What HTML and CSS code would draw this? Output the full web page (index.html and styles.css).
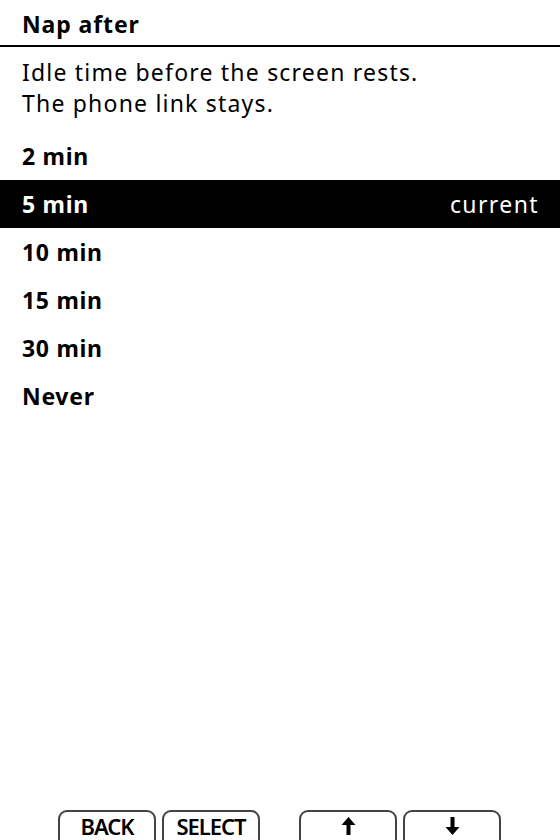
FILE: index.html
```html
<!DOCTYPE html>
<html lang="en">
<head>
  <meta charset="UTF-8">
  <meta name="viewport" content="width=device-width, initial-scale=1.0">
  <link rel="stylesheet" href="styles.css">
</head>
<body>
  <div class="screen">
    <div class="header">Nap after</div>

    <div class="desc">
      <div>Idle time before the screen rests.</div>
      <div>The phone link stays.</div>
    </div>

    <ul class="options">
      <li class="option">2 min</li>
      <li class="option selected">5 min <span class="tag">current</span></li>
      <li class="option">10 min</li>
      <li class="option">15 min</li>
      <li class="option">30 min</li>
      <li class="option">Never</li>
    </ul>

    <div class="hints">
      <div class="hint">BACK</div>
      <div class="hint">SELECT</div>
      <div class="hint spaced">
        <svg width="15" height="18" viewBox="0 0 15 18">
          <path d="M7.5 0 L0.5 8 H5.5 V18 H9.5 V8 H14.5 Z" fill="#000"/>
        </svg>
      </div>
      <div class="hint">
        <svg width="15" height="18" viewBox="0 0 15 18">
          <path d="M7.5 18 L0.5 10 H5.5 V0 H9.5 V10 H14.5 Z" fill="#000"/>
        </svg>
      </div>
    </div>
  </div>
</body>
</html>
```

FILE: styles.css
```css
body {
  margin: 0;
  background-color: white;
  color: black;
  font-family: 'Noto Sans', 'Open Sans', sans-serif;
}

.screen {
  width: 560px;
  height: 840px;
  display: flex;
  flex-direction: column;
  overflow: hidden;
}

.header {
  height: 45px;
  padding: 0 22px;
  line-height: 48px;
  font-size: 23px;
  font-weight: bold;
  letter-spacing: 0.9px;
  border-bottom: 2px solid black;
}

.desc {
  padding: 10px 22px 0;
  font-size: 23px;
  line-height: 31px;
  letter-spacing: 1.2px;
  height: 75px;
}

.options {
  list-style: none;
  margin: 0;
  padding: 0;
}

.option {
  height: 48px;
  line-height: 48px;
  padding: 0 22px;
  font-size: 23px;
  font-weight: bold;
  letter-spacing: 0.7px;
  display: flex;
  justify-content: space-between;
}

.option.selected {
  background-color: black;
  color: white;
}

.tag {
  font-weight: normal;
  letter-spacing: 1.4px;
  margin-right: -1px;
}

.hints {
  margin-top: auto;
  display: flex;
  gap: 6px;
  padding-left: 58px;
  height: 30px;
}

.hint {
  width: 94px;
  height: 36px;
  padding-top: 1px;
  border: 2px solid #444;
  border-radius: 9px 9px 0 0;
  text-align: center;
  font-size: 22px;
  font-weight: 600;
  line-height: 26px;
  letter-spacing: -1px;
}

.hint svg {
  margin-top: 4px;
}

.spaced {
  margin-left: 33px;
}
```
